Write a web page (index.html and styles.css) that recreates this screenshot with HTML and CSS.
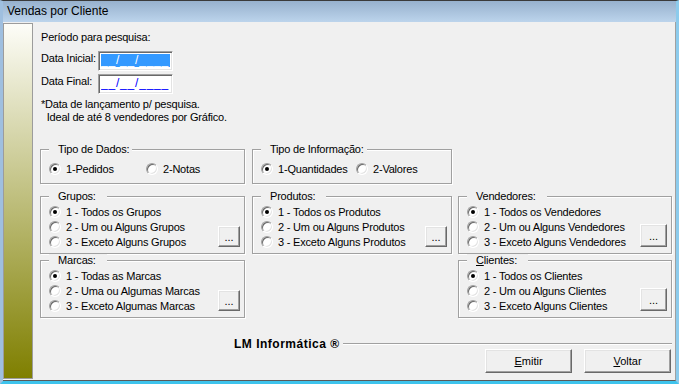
FILE: index.html
```html
<!DOCTYPE html>
<html lang="pt-BR">
<head>
  <meta charset="UTF-8">
  <title>Vendas por Cliente</title>
  <link rel="stylesheet" href="styles.css">
</head>
<body>
  <div class="window">
    <div class="titlebar">Vendas por Cliente</div>

    <div class="client">
      <div class="sidebar"></div>

      <div class="content">
        <p class="caption">Período para pesquisa:</p>

        <div class="dates">
          <label>Data Inicial:</label>
          <span class="date-input"><span class="mask sel">__/__/____</span></span>
          <label>Data Final:</label>
          <span class="date-input"><span class="mask">__/__/____</span></span>
        </div>

        <p class="note">*Data de lançamento p/ pesquisa.<br>&nbsp;&nbsp;Ideal de até 8 vendedores por Gráfico.</p>

        <div class="groups">
          <fieldset class="box pair-box dados">
            <legend>Tipo de Dados:</legend>
            <div class="pair">
              <div class="opt"><span class="radio on"></span>1-Pedidos</div>
              <div class="opt"><span class="radio"></span>2-Notas</div>
            </div>
          </fieldset>

          <fieldset class="box pair-box info">
            <legend>Tipo de Informação:</legend>
            <div class="pair">
              <div class="opt"><span class="radio on"></span>1-Quantidades</div>
              <div class="opt"><span class="radio"></span>2-Valores</div>
            </div>
          </fieldset>

          <fieldset class="box list grupos">
            <legend>Grupos:</legend>
            <div class="box-body">
              <div class="opts">
                <div class="opt"><span class="radio on"></span>1 - Todos os Grupos</div>
                <div class="opt"><span class="radio"></span>2 - Um ou Alguns Grupos</div>
                <div class="opt"><span class="radio"></span>3 - Exceto Alguns Grupos</div>
              </div>
              <button class="dots">...</button>
            </div>
          </fieldset>

          <fieldset class="box list produtos">
            <legend>Produtos:</legend>
            <div class="box-body">
              <div class="opts">
                <div class="opt"><span class="radio on"></span>1 - Todos os Produtos</div>
                <div class="opt"><span class="radio"></span>2 - Um ou Alguns Produtos</div>
                <div class="opt"><span class="radio"></span>3 - Exceto Alguns Produtos</div>
              </div>
              <button class="dots">...</button>
            </div>
          </fieldset>

          <fieldset class="box list vendedores">
            <legend>Vendedores:</legend>
            <div class="box-body">
              <div class="opts">
                <div class="opt"><span class="radio on"></span>1 - Todos os Vendedores</div>
                <div class="opt"><span class="radio"></span>2 - Um ou Alguns Vendedores</div>
                <div class="opt"><span class="radio"></span>3 - Exceto Alguns Vendedores</div>
              </div>
              <button class="dots big">...</button>
            </div>
          </fieldset>

          <fieldset class="box list marcas">
            <legend>Marcas:</legend>
            <div class="box-body">
              <div class="opts">
                <div class="opt"><span class="radio on"></span>1 - Todas as Marcas</div>
                <div class="opt"><span class="radio"></span>2 - Uma ou Algumas Marcas</div>
                <div class="opt"><span class="radio"></span>3 - Exceto Algumas Marcas</div>
              </div>
              <button class="dots">...</button>
            </div>
          </fieldset>

          <fieldset class="box list clientes">
            <legend><u>C</u>lientes:</legend>
            <div class="box-body">
              <div class="opts">
                <div class="opt"><span class="radio on"></span>1 - Todos os Clientes</div>
                <div class="opt"><span class="radio"></span>2 - Um ou Alguns Clientes</div>
                <div class="opt"><span class="radio"></span>3 - Exceto Alguns Clientes</div>
              </div>
              <button class="dots big">...</button>
            </div>
          </fieldset>
        </div>

        <div class="footer">
          <div class="brand">LM Informática ®<span class="rule"></span></div>
          <div class="actions">
            <button class="btn"><u>E</u>mitir</button>
            <button class="btn"><u>V</u>oltar</button>
          </div>
        </div>
      </div>
    </div>
  </div>
</body>
</html>
```

FILE: styles.css
```css
body {
  margin: 0;
  font: 11px "Liberation Sans", Arial, sans-serif;
  letter-spacing: -0.2px;
  color: #000;
}
.window {
  width: 679px;
  height: 384px;
  box-sizing: border-box;
  display: flex;
  flex-direction: column;
  background: #f0f0f0;
  border-top: 1px solid #3a3a3a;
  border-left: 3px solid #9fbfdf;
  border-right: 3px solid #8ccbec;
  border-bottom: 3px solid #3ec3ec;
}
.titlebar {
  height: 21px;
  line-height: 21px;
  padding-left: 4px;
  font-size: 12px;
  letter-spacing: 0;
  background: linear-gradient(#97b1cd, #bcd4ec);
}
.client {
  flex: 1;
  display: flex;
  min-height: 0;
  border-right: 1px solid #a0a0a0;
  border-bottom: 1px solid #5a5a5a;
}
.sidebar {
  width: 29px;
  margin: 1px 0;
  border: 1px solid #9c9c9c;
  background: linear-gradient(#fdfdf8, #7f7f00);
}
.content {
  flex: 1;
  padding: 9px 3px 0 7px;
}
.caption {
  margin: 0 0 0 1px;
  line-height: 13px;
}
.dates {
  display: grid;
  grid-template-columns: 57px 75px;
  grid-auto-rows: 20px;
  row-gap: 3px;
  margin: 7px 0 0 1px;
}
.dates label {
  line-height: 13px;
  padding-top: 1px;
}
.date-input {
  box-sizing: border-box;
  height: 20px;
  padding: 2px;
  background: #fff;
  border: 1px solid;
  border-color: #a0a0a0 #fff #fff #a0a0a0;
  box-shadow: inset 1px 1px 0 #696969, inset -1px -1px 0 #e3e3e3;
}
.mask {
  display: block;
  height: 13px;
  line-height: 13px;
  font-size: 12px;
  letter-spacing: 0.8px;
  color: #0000ff;
  overflow: hidden;
}
.mask.sel {
  background: #3399ff;
  color: #fff;
}
.note {
  margin: 4px 0 0 1px;
  line-height: 13px;
}

.groups {
  display: grid;
  grid-template-columns: 205px 200px 213px;
  grid-template-areas:
    "dados info ."
    "grupos produtos vendedores"
    "marcas . clientes";
  column-gap: 7px;
  align-items: start;
  margin-top: 19px;
}
.groups .info { margin-left: 0; }
.groups .vendedores, .groups .clientes { margin-left: -1px; }
.dados { grid-area: dados; }
.info { grid-area: info; }
.grupos { grid-area: grupos; }
.produtos { grid-area: produtos; }
.vendedores { grid-area: vendedores; }
.marcas { grid-area: marcas; }
.clientes { grid-area: clientes; }

.box {
  margin: 0;
  min-width: 0;
  padding: 1px 4px 4px 8px;
  border: 1px solid #a0a0a0;
  box-shadow: 1px 1px 0 #fff, inset 1px 1px 0 #fff;
}
.box legend {
  padding: 0 3px 0 9px;
  line-height: 13px;
  background: #f0f0f0;
}
.list legend {
  padding-right: 11px;
}
.pair-box {
  padding-top: 5px;
  padding-bottom: 7px;
  margin-bottom: 6px;
}
.pair {
  display: grid;
}
.dados .pair { grid-template-columns: 97px auto; }
.info .pair { grid-template-columns: 95px auto; }

.box-body {
  display: flex;
  justify-content: space-between;
  align-items: flex-end;
}
.opt {
  display: flex;
  align-items: center;
  gap: 5px;
  height: 15px;
  white-space: nowrap;
}
.radio {
  position: relative;
  flex: none;
  width: 12px;
  height: 12px;
  box-sizing: border-box;
  border-radius: 50%;
  background: #fff;
  border: 1px solid;
  border-color: #a0a0a0 #fff #fff #a0a0a0;
  box-shadow: inset 1px 1px 0 #696969, inset -1px -1px 0 #e3e3e3;
}
.radio.on::after {
  content: "";
  position: absolute;
  left: 3px;
  top: 3px;
  width: 4px;
  height: 4px;
  border-radius: 50%;
  background: #000;
}

.dots, .btn {
  padding: 0;
  font: 11px "Liberation Sans", Arial, sans-serif;
  color: #000;
  background: #f0f0f0;
  border: 1px solid;
  border-color: #fff #696969 #696969 #fff;
  box-shadow: inset -1px -1px 0 #a0a0a0, inset 1px 1px 0 #e3e3e3;
}
.dots {
  width: 22px;
  height: 21px;
  margin-bottom: 2px;
  flex: none;
}
.dots.big {
  width: 27px;
  height: 23px;
}

.footer {
  margin-top: 20px;
}
.brand {
  display: flex;
  align-items: center;
  height: 12px;
  line-height: 12px;
  margin-left: 194px;
  font-size: 12px;
  font-weight: bold;
  letter-spacing: 0.5px;
}
.rule {
  flex: 1;
  margin-left: 3px;
  border-top: 1px solid #a0a0a0;
  border-bottom: 1px solid #fff;
}
.actions {
  display: flex;
  justify-content: flex-end;
  gap: 12px;
  margin: -1px 1px 0 0;
}
.btn {
  width: 87px;
  height: 24px;
}
```
